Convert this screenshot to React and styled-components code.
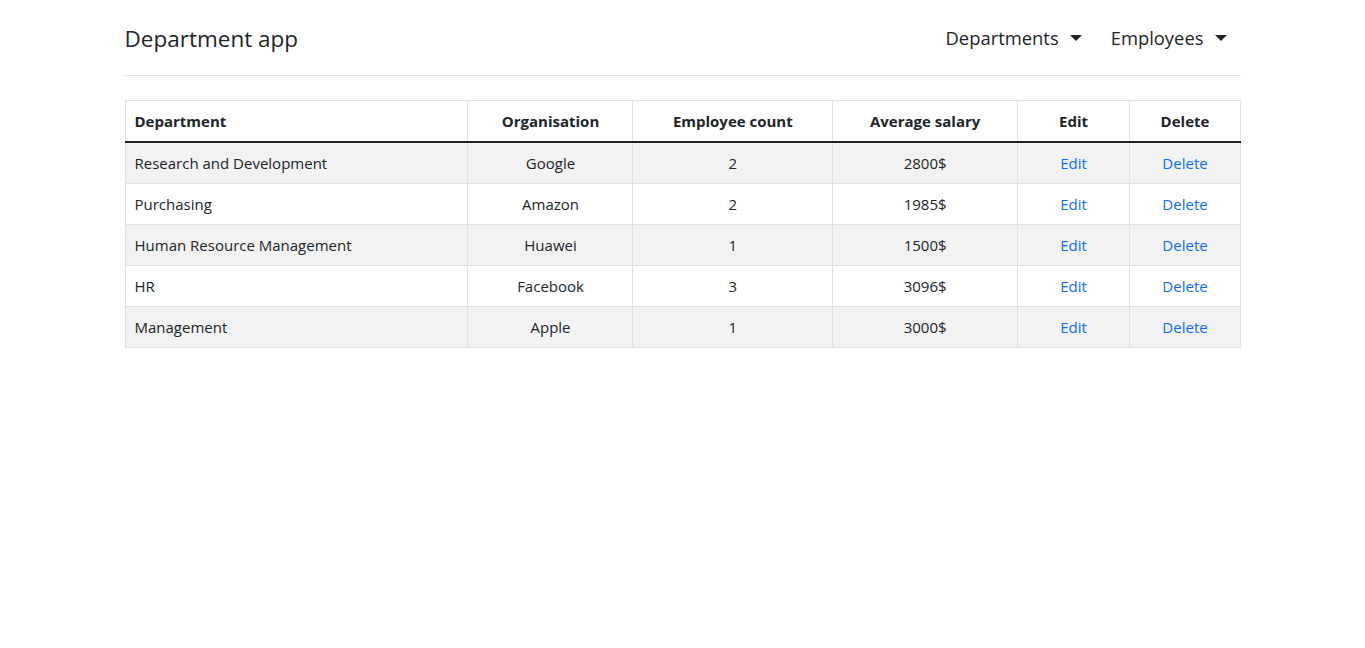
import React from "react";
import styled, { createGlobalStyle } from "styled-components";

const Global = createGlobalStyle`
  body {
    margin: 0;
    font-family: "Open Sans", "Noto Sans", sans-serif;
    font-size: 15px;
    line-height: 24px;
    color: #212529;
    background: #fff;
  }
`;

const Container = styled.div`
  max-width: 1116px;
  margin: 0 auto;
  padding: 0 12px;
`;

const Header = styled.header`
  display: flex;
  align-items: center;
  justify-content: space-between;
  height: 75px;
  border-bottom: 1px solid #dee2e6;
`;

const Brand = styled.div`
  font-size: 22.5px;
  font-weight: 400;
  color: #212529;
  line-height: 32px;
  padding-top: 2px;
`;

const Nav = styled.nav`
  display: flex;
  align-items: center;
  gap: 29px;
  padding-right: 14px;
`;

const NavItem = styled.div`
  display: flex;
  align-items: center;
  font-size: 18.4px;
  line-height: 28px;
  color: #212529;
  cursor: pointer;
`;

const Caret = styled.span`
  display: inline-block;
  margin-left: 11px;
  width: 0;
  height: 0;
  border-top: 6px solid #212529;
  border-left: 6px solid transparent;
  border-right: 6px solid transparent;
`;

const Table = styled.table`
  width: 100%;
  margin-top: 24px;
  border-collapse: collapse;
  table-layout: fixed;
  border: 1px solid #dee2e6;
`;

const Th = styled.th`
  box-sizing: border-box;
  padding: 8px 8px 8px 9px;
  font-weight: 700;
  text-align: ${(p) => (p.$left ? "left" : "center")};
  border: 1px solid #dee2e6;
  border-bottom: 2px solid #212529;
  width: ${(p) => p.$w};
`;

const Tr = styled.tr`
  background: ${(p) => (p.$striped ? "#f2f2f2" : "#fff")};
`;

const Td = styled.td`
  padding: 8px 8px 8px 9px;
  border: 1px solid #dee2e6;
  text-align: ${(p) => (p.$left ? "left" : "center")};
`;

const Link = styled.a`
  color: #0d6efd;
  text-decoration: none;
  cursor: pointer;
`;

const rows = [
  ["Research and Development", "Google", 2, "2800$"],
  ["Purchasing", "Amazon", 2, "1985$"],
  ["Human Resource Management", "Huawei", 1, "1500$"],
  ["HR", "Facebook", 3, "3096$"],
  ["Management", "Apple", 1, "3000$"],
];

export default function App() {
  return (
    <>
      <Global />
      <Container>
        <Header>
          <Brand>Department app</Brand>
          <Nav>
            <NavItem>
              Departments
              <Caret />
            </NavItem>
            <NavItem>
              Employees
              <Caret />
            </NavItem>
          </Nav>
        </Header>
        <Table>
          <thead>
            <tr>
              <Th $left $w="30.73%">Department</Th>
              <Th $w="14.78%">Organisation</Th>
              <Th $w="17.92%">Employee count</Th>
              <Th $w="16.58%">Average salary</Th>
              <Th $w="10.04%">Edit</Th>
              <Th $w="9.95%">Delete</Th>
            </tr>
          </thead>
          <tbody>
            {rows.map((r, i) => (
              <Tr key={i} $striped={i % 2 === 0}>
                <Td $left>{r[0]}</Td>
                <Td>{r[1]}</Td>
                <Td>{r[2]}</Td>
                <Td>{r[3]}</Td>
                <Td>
                  <Link>Edit</Link>
                </Td>
                <Td>
                  <Link>Delete</Link>
                </Td>
              </Tr>
            ))}
          </tbody>
        </Table>
      </Container>
    </>
  );
}
